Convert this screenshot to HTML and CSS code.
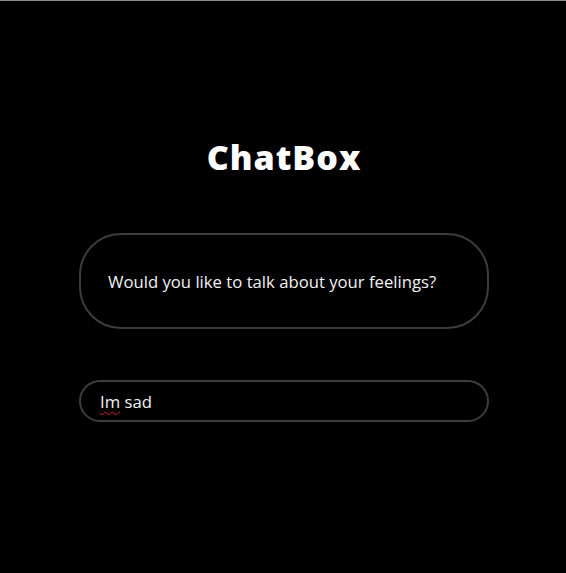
FILE: index.html
```html
<!DOCTYPE html>
<html lang="en">
<head>
<meta charset="utf-8">
<title>ChatBox</title>
<link rel="stylesheet" href="styles.css">
</head>
<body>
<main class="page">
  <h1 class="title">ChatBox</h1>
  <div class="reply">Would you like to talk about your feelings?</div>
  <div class="input"><span class="misspelled">Im</span> sad</div>
</main>
</body>
</html>
```
FILE: styles.css
```css
html, body {
  margin: 0;
  padding: 0;
  background: #000;
  height: 100%;
}
body {
  border-top: 1px solid #8a8a8a;
  box-sizing: border-box;
  font-family: "Open Sans", "Liberation Sans", sans-serif;
  color: #fff;
}
.page {
  width: 410px;
  margin: 0 auto;
  padding-top: 135px;
  display: flex;
  flex-direction: column;
  transform: translateX(1px);
}
.title {
  margin: 0;
  text-align: center;
  font-size: 34px;
  font-weight: 800;
  line-height: 42px;
  letter-spacing: 1px;
}
.reply {
  margin-top: 55px;
  height: 96px;
  box-sizing: border-box;
  border: 2px solid #3d3d3d;
  border-radius: 42px;
  padding: 0 27px;
  display: flex;
  align-items: center;
  font-size: 16.7px;
  color: #f2f2f2;
}
.input {
  margin-top: 51px;
  height: 42px;
  box-sizing: border-box;
  border: 2px solid #3d3d3d;
  border-radius: 21px;
  padding: 0 19px;
  display: flex;
  align-items: center;
  font-size: 16.7px;
  color: #f2f2f2;
  white-space: pre;
}
.misspelled {
  text-decoration: underline wavy #e01b1b;
  text-decoration-thickness: 1px;
  text-underline-offset: 3px;
}
```
